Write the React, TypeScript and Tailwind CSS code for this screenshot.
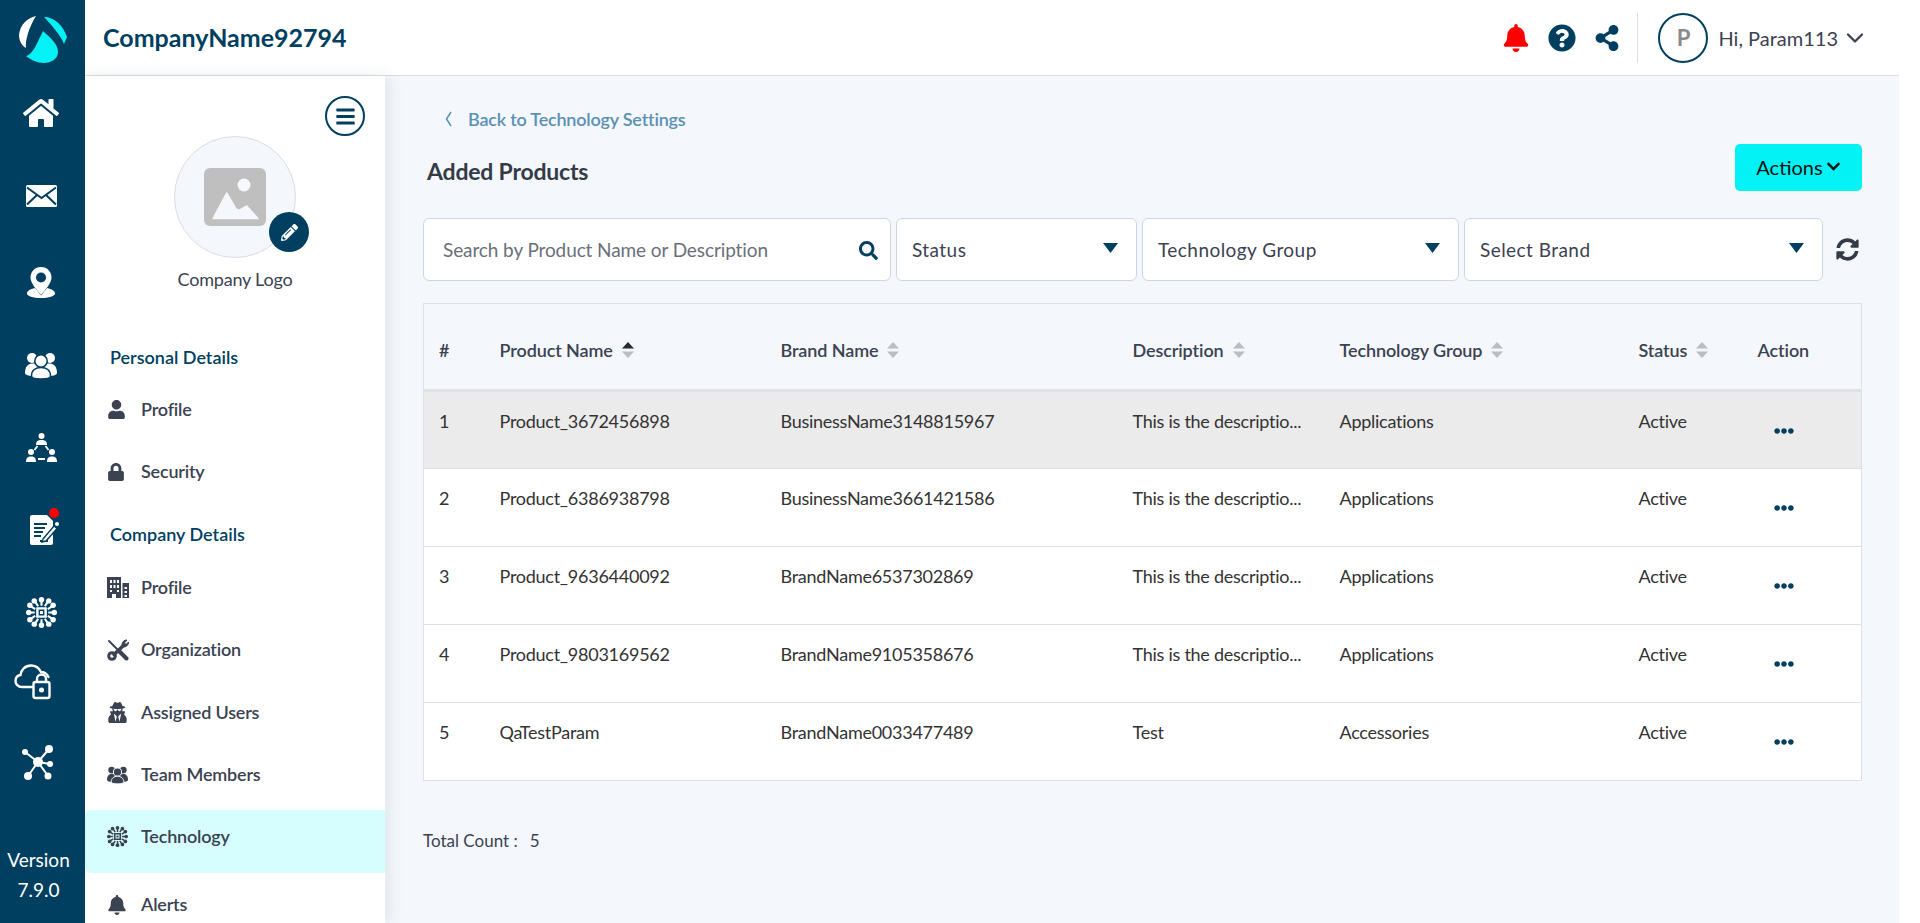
import type { ReactNode } from "react";
import {
  FaBars,
  FaBell,
  FaChevronDown,
  FaEllipsisH,
  FaHome,
  FaLock,
  FaPencilAlt,
  FaQuestionCircle,
  FaSearch,
  FaShareAlt,
  FaSyncAlt,
  FaUser,
  FaUserSecret,
} from "react-icons/fa";
import { FiChevronDown } from "react-icons/fi";

const LogoMark = () => (
  <svg viewBox="18 17 48 48" className="w-12 h-12">
    <path d="M35 17C26 19 19 26 18 36C18 42 21 47 25 49C24 42 28 28 35 17Z" fill="#fff" />
    <path d="M43 18C53 18 62 26 66 38L63 45C59 35 51 27 43 18Z" fill="#03f2f5" />
    <path d="M42 32C48 38 57 44 57 53C57 60 50 64 43 64C36 64 30 61 25 57C32 56 37 42 42 32Z" fill="#03f2f5" />
  </svg>
);

const MailIcon = () => (
  <svg viewBox="0 0 31 22" className="w-[31px] h-[22px]">
    <rect width="31" height="22" rx="1.500" fill="#fff" />
    <path d="M1 2.500L15.500 13L30 2.500M1 19.500L11 10M30 19.500L20 10" stroke="#003f5f" strokeWidth="2" fill="none" />
  </svg>
);

const PinIcon = () => (
  <svg viewBox="0 0 28 31" className="w-7 h-[31px]">
    <path d="M8 21C3 22 0 24 0 26.500C0 29 6 31 14 31C22 31 28 29 28 26.500C28 24 25 22 20 21L14 28.500Z" fill="#fff" />
    <path fillRule="evenodd" d="M14 0C7.500 0 3.500 5 3.500 10.500C3.500 16.500 10 23 14 28C18 23 24.500 16.500 24.500 10.500C24.500 5 20.500 0 14 0ZM14 5.500A5 5 0 1 1 14 15.500A5 5 0 1 1 14 5.500Z" fill="#fff" />
  </svg>
);

const PeopleIcon = ({ color, cut, size }: { color: string; cut: string; size: string }) => (
  <svg viewBox="0 0 32 27" className={size}>
    <circle cx="7" cy="6" r="5" fill={color} />
    <circle cx="25" cy="6" r="5" fill={color} />
    <path d="M0 21C0 15 3 11.500 7 11.500H25C29 11.500 32 15 32 21C32 23 28 24 25 24H7C4 24 0 23 0 21Z" fill={color} />
    <circle cx="16" cy="9" r="6.200" fill={color} stroke={cut} strokeWidth="1.500" />
    <path d="M6.500 24C6.500 18.500 10.500 15.500 16 15.500C21.500 15.500 25.500 18.500 25.500 24C25.500 26 21 27 16 27C11 27 6.500 26 6.500 24Z" fill={color} stroke={cut} strokeWidth="1.500" />
  </svg>
);

const HierarchyIcon = () => (
  <svg viewBox="0 0 31 30" className="w-[31px] h-[30px]" fill="#fff">
    <circle cx="15.500" cy="3" r="3" />
    <path d="M10 12C10 8 12 7 15.500 7C19 7 21 8 21 12Z" />
    <circle cx="5" cy="19" r="3" />
    <path d="M0 29C0 25 1.500 23.500 5 23.500C8.500 23.500 10 25 10 29Z" />
    <circle cx="26" cy="19" r="3" />
    <path d="M21 29C21 25 22.500 23.500 26 23.500C29.500 23.500 31 25 31 29Z" />
    <path d="M11.500 13L8.500 17M19.500 13L22.500 17" stroke="#fff" strokeWidth="1.800" />
    <path d="M12 26H19" stroke="#fff" strokeWidth="2" />
  </svg>
);

const DocIcon = () => (
  <svg viewBox="0 0 29 30" className="w-[29px] h-[30px]">
    <path d="M2 0H17L23 6V28A2 2 0 0 1 21 30H2A2 2 0 0 1 0 28V2A2 2 0 0 1 2 0Z" fill="#fff" />
    <path d="M4 9H17M4 13H15M4 17H13M4 21H11M10 26H18" stroke="#003f5f" strokeWidth="1.800" />
    <path d="M13 24L24 11L27 13.500L16 26L12 27Z" fill="#fff" stroke="#003f5f" strokeWidth="1.400" />
    <circle cx="27" cy="9" r="2" fill="#fff" />
  </svg>
);

const ChipIcon = ({ color = "#fff", size = "w-[31px] h-[31px]" }: { color?: string; size?: string }) => (
  <svg viewBox="0 0 32 32" className={size} fill={color}>
    <path fillRule="evenodd" d="M10.500 10.500H21.500V21.500H10.500ZM13 13V19H19V13Z" />
    <rect x="14.500" y="14.500" width="3" height="3" />
    <g stroke={color} strokeWidth="2.200" fill="none">
      <path d="M16 3V9M9 4L12.500 9.500M23 4L19.500 9.500M16 29V23M9 28L12.500 22.500M23 28L19.500 22.500" />
      <path d="M3 16H9M4 9L9.500 12.500M4 23L9.500 19.500M29 16H23M28 9L22.500 12.500M28 23L22.500 19.500" />
    </g>
    <circle cx="16" cy="2.800" r="2.800" /><circle cx="8.500" cy="4" r="2.800" /><circle cx="23.500" cy="4" r="2.800" />
    <circle cx="16" cy="29.200" r="2.800" /><circle cx="8.500" cy="28" r="2.800" /><circle cx="23.500" cy="28" r="2.800" />
    <circle cx="2.800" cy="16" r="2.800" /><circle cx="4" cy="8.500" r="2.800" /><circle cx="4" cy="23.500" r="2.800" />
    <circle cx="29.200" cy="16" r="2.800" /><circle cx="28" cy="8.500" r="2.800" /><circle cx="28" cy="23.500" r="2.800" />
  </svg>
);

const CloudLockIcon = () => (
  <svg viewBox="0 0 38 36" className="w-[38px] h-9">
    <path d="M19 23H8C4 23 1.500 20 1.500 17C1.500 14 3.500 11.500 6.500 11C7 6 11 1.500 17 1.500C21.500 1.500 25 4 27 8C30 8 33 10 34.500 13" fill="none" stroke="#fff" strokeWidth="2.400" strokeLinecap="round" />
    <rect x="19.500" y="18" width="16" height="16" rx="2" fill="none" stroke="#fff" strokeWidth="2.400" />
    <path d="M23 18V15A4.500 4.500 0 0 1 32 15V18" fill="none" stroke="#fff" strokeWidth="2.400" />
    <circle cx="27.500" cy="26" r="2.500" fill="#fff" />
  </svg>
);

const NetworkIcon = () => (
  <svg viewBox="0 0 33 37" className="w-[33px] h-[37px]" fill="#fff" stroke="#fff">
    <path d="M17 18L4 8M17 18L28 5M17 18L29 20M17 18L7 32M17 18L27 32" strokeWidth="2" />
    <circle cx="17" cy="18" r="5" stroke="none" />
    <circle cx="4" cy="8" r="3" stroke="none" />
    <circle cx="28" cy="5" r="4" stroke="none" />
    <circle cx="29" cy="20" r="3" stroke="none" />
    <circle cx="7" cy="32" r="4" stroke="none" />
    <circle cx="27" cy="32" r="3.500" stroke="none" />
  </svg>
);

const BuildingsIcon = () => (
  <svg viewBox="0 0 22 21" className="w-[22px] h-[21px]" fill="#3b4252">
    <path fillRule="evenodd" d="M0 0H14V21H9V17H5V21H0ZM3 3V6H5V3ZM6.500 3V6H8.500V3ZM10 3V6H12V3ZM3 8V11H5V8ZM6.500 8V11H8.500V8ZM10 8V11H12V8ZM3 13V15H5V13ZM10 13V15H12V13Z" />
    <path fillRule="evenodd" d="M15.500 6H22V21H15.500ZM17.500 10V12H20V10ZM17.500 14V16H20V14ZM17.500 18V20H20V18Z" />
  </svg>
);

const ToolsIcon = () => (
  <svg viewBox="0 0 22 22" className="w-[22px] h-[22px]" fill="none" stroke="#3b4252" strokeLinecap="round">
    <path d="M2 2L12 12" strokeWidth="2" />
    <path d="M12.500 12.500L19.500 19.500" strokeWidth="4" />
    <path d="M17 6L7 15.500" strokeWidth="3.500" />
    <path d="M15 5A4.500 4.500 0 0 1 20 1L17.500 4L19 5.500L21.500 3A4.500 4.500 0 0 1 17 8Z" fill="#3b4252" strokeWidth="1" />
    <circle cx="5" cy="17" r="3.300" strokeWidth="3" />
  </svg>
);

const ImagePlaceholder = () => (
  <svg viewBox="0 0 62 58" className="w-[62px] h-[58px]">
    <rect width="62" height="58" rx="6" fill="#bfbfbf" />
    <circle cx="40" cy="17" r="6.500" fill="#f4f7fb" />
    <path d="M9 50.500L22.700 25L32 41L35 42.500L42.700 38L54 50.500Z" fill="#f4f7fb" stroke="#f4f7fb" strokeWidth="1.500" strokeLinejoin="round" />
  </svg>
);

const railItems: { icon: ReactNode; box: string; badge?: boolean }[] = [
  { icon: <FaHome className="text-white text-[36px]" />, box: "h-[82px]" },
  { icon: <MailIcon />, box: "h-[84px]" },
  { icon: <PinIcon />, box: "h-[88px]" },
  { icon: <PeopleIcon color="#fff" cut="#003f5f" size="w-8 h-[27px]" />, box: "h-[78px]" },
  { icon: <HierarchyIcon />, box: "h-[88px]" },
  { icon: <div className="ml-[6px]"><DocIcon /></div>, box: "h-[76px]", badge: true },
  { icon: <ChipIcon />, box: "h-[88px]" },
  { icon: <div className="-ml-[16px]"><CloudLockIcon /></div>, box: "h-[52px]" },
  { icon: <div className="-ml-[8px]"><NetworkIcon /></div>, box: "h-[108px]" },
];

const Rail = () => (
  <aside className="w-[85px] shrink-0 h-full bg-[#003f5f] flex flex-col items-center relative z-20">
    <div className="h-[72px] pb-[8px] flex items-end justify-center">
      <LogoMark />
    </div>
    {railItems.map((item, i) => (
      <div key={i} className={`${item.box} w-full pr-[3px] flex items-center justify-center relative`}>
        {item.icon}
        {item.badge && <span className="absolute top-[16px] left-[49px] w-[10px] h-[10px] rounded-full bg-[#ff0000]" />}
      </div>
    ))}
    <div className="absolute bottom-[18px] left-0 w-[77px] text-white text-center text-[19px] leading-[30px]">
      <div>Version</div>
      <div>7.9.0</div>
    </div>
  </aside>
);

const NavHeading = ({ children, className }: { children: ReactNode; className: string }) => (
  <div className={`pl-[25px] text-[#003f5f] font-semibold text-[18px] leading-[26px] ${className}`}>{children}</div>
);

const NavItem = ({ icon, label, active, className = "" }: { icon: ReactNode; label: string; active?: boolean; className?: string }) => (
  <div className={`h-[62.500px] flex items-center ${active ? "bg-[#d6feff] rounded-l-md" : ""} ${className}`}>
    <div className="w-[56px] pl-[22px] shrink-0 text-[#3b4252] flex items-center">{icon}</div>
    <span className="text-[#3b4252] font-semibold text-[18px] tracking-[-0.2px]">{label}</span>
  </div>
);

const Sidebar = () => (
  <nav className="w-[300px] shrink-0 bg-white shadow-[3px_0_14px_rgba(90,110,150,0.14)] relative z-10 overflow-hidden">
    <div className="flex justify-end pt-[20px] pr-[20px]">
      <div className="w-10 h-10 rounded-full border-2 border-[#003f5f] flex items-center justify-center">
        <FaBars className="text-[#003f5f] text-[21px]" />
      </div>
    </div>
    <div className="flex flex-col items-center">
      <div className="w-[122px] h-[122px] rounded-full bg-[#f4f7fb] border border-[#d9dde2] flex items-center justify-center relative">
        <ImagePlaceholder />
        <div className="absolute right-[-14px] bottom-[5px] w-10 h-10 rounded-full bg-[#003f5f] flex items-center justify-center">
          <FaPencilAlt className="text-white text-[17px]" />
        </div>
      </div>
      <div className="mt-[8px] text-[#3b4252] text-[18px] tracking-[-0.2px] leading-[26px]">Company Logo</div>
    </div>
    <NavHeading className="mt-[52px]">Personal Details</NavHeading>
    <div className="mt-[8px]">
      <NavItem icon={<FaUser className="text-[19px]" />} label="Profile" />
      <NavItem icon={<FaLock className="text-[18px]" />} label="Security" />
    </div>
    <NavHeading className="mt-[18px]">Company Details</NavHeading>
    <div className="mt-[9px]">
      <NavItem icon={<BuildingsIcon />} label="Profile" />
      <NavItem icon={<ToolsIcon />} label="Organization" />
      <NavItem icon={<FaUserSecret className="text-[21px]" />} label="Assigned Users" />
      <NavItem icon={<PeopleIcon color="#3b4252" cut="#fff" size="w-[21px] h-[18px]" />} label="Team Members" />
      <NavItem icon={<ChipIcon color="#3b4252" size="w-[21px] h-[21px]" />} label="Technology" active className="mt-[4px] pb-[10px]" />
      <NavItem icon={<FaBell className="text-[20px]" />} label="Alerts" className="mt-[1px]" />
    </div>
  </nav>
);

const Header = () => (
  <header className="h-[76px] shrink-0 bg-white border-b border-[#dcdee2] flex items-center pl-[18px] pr-[30px]">
    <h1 className="text-[#003f5f] font-bold text-[25px]">CompanyName92794</h1>
    <div className="ml-auto flex items-center">
      <FaBell className="text-[#ff0000] text-[28px]" />
      <FaQuestionCircle className="text-[#003f5f] text-[28px] ml-[18px]" />
      <FaShareAlt className="text-[#003f5f] text-[26px] ml-[18px]" />
      <div className="w-px h-[50px] bg-[#dcdee2] ml-[17px]" />
      <div className="w-[50px] h-[50px] rounded-full border-2 border-[#003f5f] flex items-center justify-center ml-[20px] text-[#8a8a8a] font-bold text-[22px]">P</div>
      <span className="ml-[10px] text-[#3b4252] text-[20px]">Hi, Param113</span>
      <FiChevronDown className="text-[#3b4252] text-[28px] ml-[3px]" />
    </div>
  </header>
);

const Caret = () => (
  <svg viewBox="0 0 15 10" className="w-[15px] h-[10px] -mt-[4px]">
    <path d="M0 0H15L7.500 10Z" fill="#003f5f" />
  </svg>
);

const Dropdown = ({ label, width }: { label: string; width: string }) => (
  <div className={`${width} h-[63px] bg-white border border-[#ccd6e2] rounded-md flex items-center justify-between pl-[15px] pr-[18px] shrink-0`}>
    <span className="text-[#3b4252] text-[19px] tracking-[0.45px] pt-[1px]">{label}</span>
    <Caret />
  </div>
);

const SortIcon = ({ active }: { active?: boolean }) => (
  <svg viewBox="0 0 12 16" className="w-3 h-4 ml-[9px] inline-block shrink-0">
    <path d="M6 0L12 6.500H0Z" fill={active ? "#222b36" : "#b9bec4"} />
    <path d="M6 16L12 9.500H0Z" fill="#b9bec4" />
  </svg>
);

const columns: { label: string; width: string; sortable: boolean; active?: boolean }[] = [
  { label: "#", width: "w-[61px]", sortable: false },
  { label: "Product Name", width: "w-[281px]", sortable: true, active: true },
  { label: "Brand Name", width: "w-[352px]", sortable: true },
  { label: "Description", width: "w-[207px]", sortable: true },
  { label: "Technology Group", width: "w-[299px]", sortable: true },
  { label: "Status", width: "w-[119px]", sortable: true },
  { label: "Action", width: "", sortable: false },
];

const rows = [
  ["1", "Product_3672456898", "BusinessName3148815967", "This is the descriptio...", "Applications", "Active"],
  ["2", "Product_6386938798", "BusinessName3661421586", "This is the descriptio...", "Applications", "Active"],
  ["3", "Product_9636440092", "BrandName6537302869", "This is the descriptio...", "Applications", "Active"],
  ["4", "Product_9803169562", "BrandName9105358676", "This is the descriptio...", "Applications", "Active"],
  ["5", "QaTestParam", "BrandName0033477489", "Test", "Accessories", "Active"],
];

const ProductTable = () => (
  <table className="w-[1439px] table-fixed border-collapse border border-[#dde1e6] mt-[22px]">
    <thead>
      <tr className="h-[87px] border-b-[3px] border-[#dee2e6]">
        {columns.map((col) => (
          <th key={col.label} className={`${col.width} pl-[15px] pt-[7px] text-left font-semibold text-[18px] tracking-[-0.1px] text-[#3b4252]`}>
            <span className="inline-flex items-center">
              {col.label}
              {col.sortable && <SortIcon active={col.active} />}
            </span>
          </th>
        ))}
      </tr>
    </thead>
    <tbody>
      {rows.map((row, i) => (
        <tr key={row[0]} className={`h-[78.100px] border-b border-[#dde1e6] ${i === 0 ? "bg-[#ebebeb]" : "bg-white"}`}>
          {row.map((cell, c) => (
            <td key={c} className="pl-[15px] pt-[15.500px] align-top text-[18px] leading-[26px] text-[#333333] tracking-[-0.26px]">
              {cell}
            </td>
          ))}
          <td className="pl-[15px] pt-[29px] align-top">
            <FaEllipsisH className="text-[#003f5f] text-[20px] ml-[16px]" />
          </td>
        </tr>
      ))}
    </tbody>
  </table>
);

const App = () => (
  <div className="h-screen w-[1899px] flex overflow-hidden font-['Lato',sans-serif] bg-[#f4f7fb]">
    <Rail />
    <div className="flex-1 min-w-0 flex flex-col">
      <Header />
      <div className="flex-1 min-h-0 flex">
        <Sidebar />
        <main className="flex-1 min-w-0 pl-[38px] pr-[37px] pt-[30px]">
          <a className="flex items-center pl-[22px] gap-[16px] text-[#5b90b5] font-semibold text-[18px] tracking-[-0.2px] leading-[26px]">
            <svg viewBox="0 0 7 16" className="w-[7px] h-4" fill="none" stroke="#5b90b5" strokeWidth="1.500">
              <path d="M6 1L1.500 8L6 15" />
            </svg>
            Back to Technology Settings
          </a>
          <div className="flex items-start justify-between mt-[12px]">
            <h2 className="pl-[4px] pt-[11px] text-[#333b47] font-bold text-[23px] tracking-[-0.2px] leading-[32px]">Added Products</h2>
            <button className="w-[127px] h-[47px] pb-[2px] bg-[#03f2f5] rounded-[5px] flex items-center justify-center gap-[3px] text-[#111] text-[20px]">
              Actions
              <FaChevronDown className="text-[15px]" />
            </button>
          </div>
          <div className="flex items-center mt-[27px] gap-[5px]">
            <div className="w-[468px] h-[63px] bg-white border border-[#ccd6e2] rounded-md flex items-center justify-between pl-[19px] pr-[12px] shrink-0">
              <span className="text-[#6a7079] text-[19px] tracking-[-0.1px] pt-[1px]">Search by Product Name or Description</span>
              <FaSearch className="text-[#003f5f] text-[19px] mt-[2px]" />
            </div>
            <Dropdown label="Status" width="w-[241px]" />
            <Dropdown label="Technology Group" width="w-[317px]" />
            <Dropdown label="Select Brand" width="w-[359px]" />
            <FaSyncAlt className="text-[#333b47] text-[23px] ml-[8px] shrink-0" />
          </div>
          <ProductTable />
          <div className="mt-[47px] text-[#3b4252] text-[17px]">
            Total Count :<span className="ml-[12px]">5</span>
          </div>
        </main>
      </div>
    </div>
  </div>
);

export default App;
